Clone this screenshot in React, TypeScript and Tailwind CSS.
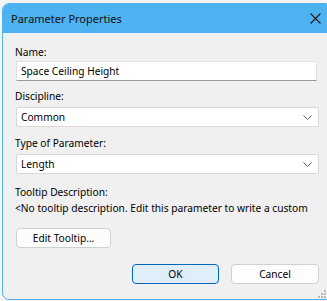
import React from "react";

function Chevron() {
  return (
    <svg width="9" height="5" viewBox="0 0 9 5" className="block">
      <path d="M0.5 0.5 L4.5 4.5 L8.5 0.5" fill="none" stroke="#606060" strokeWidth="1" />
    </svg>
  );
}

function Select({ value }: { value: string }) {
  return (
    <div className="flex h-[20px] w-[303px] items-center justify-between rounded-[2px] border border-[#d9d9d9] bg-white pl-[4px] pr-[6px]">
      <span>{value}</span>
      <Chevron />
    </div>
  );
}

export default function App() {
  return (
    <div
      className="relative h-[301px] w-[327px] overflow-hidden bg-[#f4f4f4] text-[10.2px] leading-[16px] text-black"
      style={{ fontFamily: '"Noto Sans", "Open Sans", sans-serif' }}
    >
      <div className="ml-[2px] mt-[3px] flex h-[297px] w-[330px] flex-col overflow-hidden rounded-[7px] border border-[#4cb2f0] bg-[#f0f0f0]">
        <div className="flex h-[29px] shrink-0 items-center justify-between bg-[#4cb2f0] pl-[8px] pr-[10px]">
          <span className="text-[11px] leading-[16px] text-[#111]">Parameter Properties</span>
          <svg width="11" height="11" viewBox="0 0 11 11" className="block">
            <path d="M0.5 0.5 L10.5 10.5 M10.5 0.5 L0.5 10.5" stroke="#1a1a1a" strokeWidth="1.1" />
          </svg>
        </div>
        <div className="flex flex-col pl-[13px] pt-[11px]">
          <div className="-ml-[1px]">Name:</div>
          <div className="mt-[1px] flex h-[20px] w-[301px] items-center border border-[#e3e3e3] border-b-[#9a9a9a] bg-white pl-[4px]">
            Space Ceiling Height
          </div>
          <div className="-ml-[1px] mt-[7px]">Discipline:</div>
          <div className="mt-[3px]">
            <Select value="Common" />
          </div>
          <div className="-ml-[1px] mt-[8px]">Type of Parameter:</div>
          <div className="mt-[3px]">
            <Select value="Length" />
          </div>
          <div className="-ml-[1px] mt-[10px]">Tooltip Description:</div>
          <div className="-ml-[1px] whitespace-nowrap">
            &lt;No tooltip description. Edit this parameter to write a custom
          </div>
          <div className="mt-[12px] flex h-[20px] w-[95px] items-center justify-center rounded-[4px] border border-[#d0d0d0] bg-[#fdfdfd]">
            Edit Tooltip…
          </div>
          <div className="mt-[16px] flex w-[303px] justify-end gap-[12px]">
            <div className="flex h-[20px] w-[87px] items-center justify-center rounded-[4px] border border-[#0067c0] bg-[#e0eef9]">
              OK
            </div>
            <div className="flex h-[20px] w-[88px] items-center justify-center rounded-[4px] border border-[#d0d0d0] bg-[#fdfdfd]">
              Cancel
            </div>
          </div>
        </div>
      </div>
      <svg width="8" height="8" viewBox="0 0 8 8" className="absolute bottom-[3px] right-[1px]">
        <rect x="6" y="0" width="2" height="2" fill="#b8b8b8" />
        <rect x="3" y="3" width="2" height="2" fill="#b8b8b8" />
        <rect x="6" y="3" width="2" height="2" fill="#b8b8b8" />
        <rect x="0" y="6" width="2" height="2" fill="#b8b8b8" />
        <rect x="3" y="6" width="2" height="2" fill="#b8b8b8" />
        <rect x="6" y="6" width="2" height="2" fill="#b8b8b8" />
      </svg>
    </div>
  );
}
